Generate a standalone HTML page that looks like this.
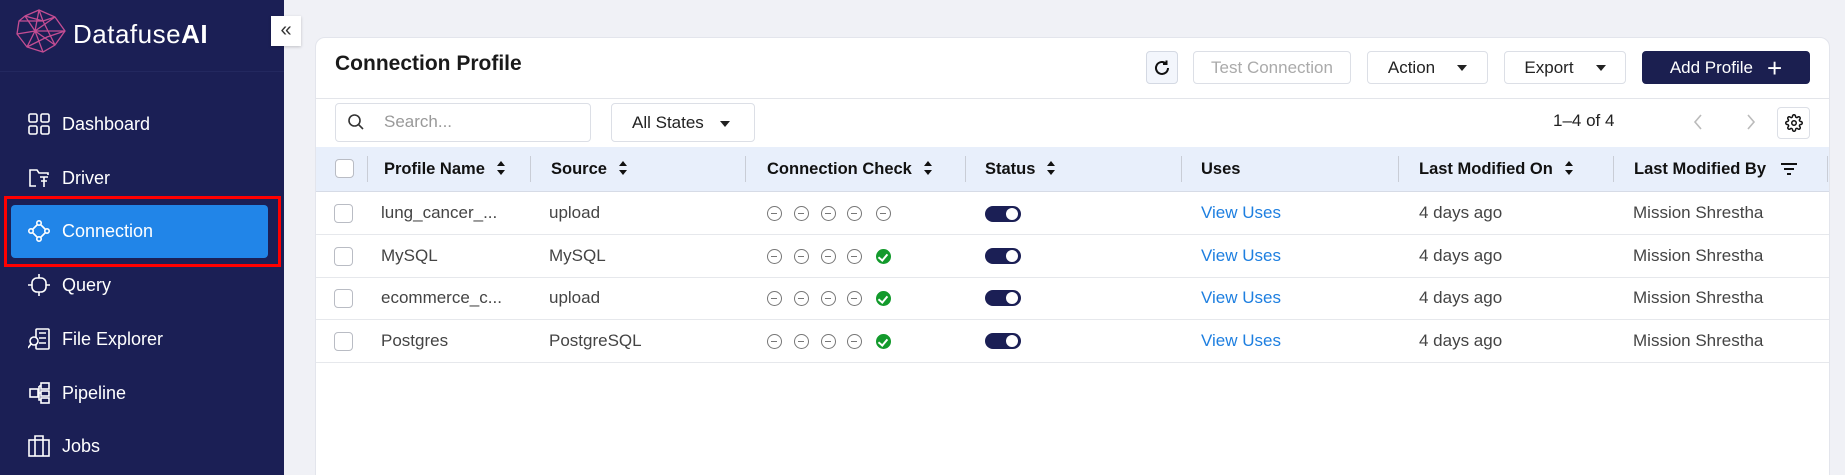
<!DOCTYPE html>
<html style="width:1845px;height:475px;overflow:hidden"><head><meta charset="utf-8">
<style>
*{box-sizing:border-box;margin:0;padding:0}
body{width:1845px;height:475px;overflow:hidden;background:#f0f1f6;font-family:"Liberation Sans",sans-serif;position:relative}
.side{position:absolute;left:0;top:0;width:284px;height:475px;background:#1b1f55}
.abs{position:absolute}
.logo-t{left:73px;top:19px;color:#fff;font-size:26px;letter-spacing:0.5px}
.hr{left:0;top:71px;width:284px;height:1px;background:#23285f}
.nav{left:28px;height:30px;color:#fff;font-size:18px;display:flex;align-items:center}
.nav svg{width:22px;height:22px;margin-right:12px;fill:none;stroke:#fff;stroke-width:1.6}
.act{left:11px;top:205px;width:257px;height:53px;background:#2185e8;border-radius:4px}
.red{left:4px;top:196px;width:277px;height:71px;border:3px solid #f00}
.coll{left:271px;top:16px;width:30px;height:30px;background:#fff;color:#333;font-size:20px;text-align:center;line-height:28px;box-shadow:0 1px 3px rgba(0,0,0,.2)}
.card{left:315px;top:37px;width:1515px;height:440px;background:#fff;border:1px solid #e3e5ec;border-radius:10px 10px 0 0}
.btn{position:absolute;top:51px;height:33px;border:1px solid #dcdfe6;border-radius:4px;background:#fff;font-size:17px;color:#222;display:flex;align-items:center;justify-content:center}
.car{display:inline-block;width:0;height:0;border-left:5px solid transparent;border-right:5px solid transparent;border-top:6px solid #222;margin-left:22px}
.th{position:absolute;top:160px;font-size:16.5px;font-weight:bold;color:#111}
.sep{position:absolute;top:156px;width:1px;height:26px;background:#c9cdd6}
.sort{display:inline-block;margin-left:12px;vertical-align:middle;position:relative;width:8px;height:14px;top:-2px}
.sort:before{content:"";position:absolute;top:0;left:0;border-left:4px solid transparent;border-right:4px solid transparent;border-bottom:5px solid #111}
.sort:after{content:"";position:absolute;bottom:0;left:0;border-left:4px solid transparent;border-right:4px solid transparent;border-top:5px solid #111}
.td{position:absolute;font-size:17px;color:#444}
.cb{position:absolute;width:19px;height:19px;border:1px solid #b9bcc4;border-radius:4px;background:#fff}
.rl{position:absolute;left:316px;width:1513px;height:1px;background:#e6e8ec}
.mc{position:absolute;width:15px;height:15px;border:1.4px solid #777;border-radius:50%}
.mc:after{content:"";position:absolute;left:3px;top:5.5px;width:6px;height:1.4px;background:#777}
.ok{position:absolute;width:15px;height:15px;border-radius:50%;background:#139a2c}
.ok:after{content:"";position:absolute;left:4px;top:3px;width:4px;height:7px;border:solid #fff;border-width:0 2px 2px 0;transform:rotate(40deg)}
.tg{position:absolute;left:985px;width:36px;height:16px;border-radius:8px;background:#1b1f55}
.tg:after{content:"";position:absolute;right:3px;top:2px;width:12px;height:12px;border-radius:50%;background:#fff}
.lk{color:#1e7fe0}
</style></head><body>
<div class="side">
<svg class="abs" style="left:15px;top:9px" width="52" height="44" viewBox="0 0 52 44" fill="none" stroke="#c44d93" stroke-width="1.3">
<path d="M10 7 L24 1 L40 8 L50 22 L40 36 L28 43 L12 38 L2 25 L4 12 Z"/>
<path d="M10 7 L20 22 L2 25 M24 1 L20 22 L28 43 M40 8 L20 22 L40 36 M50 22 L20 22 L12 38 M4 12 L28 12 L40 8 M28 12 L40 36 M12 38 L32 28 L50 22 M24 1 L28 12 M10 7 L28 12"/>
</svg>
<div class="abs logo-t">Datafuse<b>AI</b></div>
<div class="abs hr"></div>
<div class="abs act"></div>
<div class="abs red"></div>
<div class="abs nav" style="top:109px"><svg viewBox="0 0 22 22"><rect x="1" y="1" width="8" height="8" rx="1.5"/><rect x="13" y="1" width="8" height="8" rx="1.5"/><rect x="1" y="13" width="8" height="8" rx="1.5"/><rect x="13" y="13" width="8" height="8" rx="1.5"/></svg>Dashboard</div>
<div class="abs nav" style="top:163px"><svg viewBox="0 0 22 22"><path d="M8 19H2V3h7l2 3h9v2M12 10h8M16 10v10M13 14h6"/></svg>Driver</div>
<div class="abs nav" style="top:216px"><svg viewBox="0 0 22 22"><circle cx="11" cy="3" r="2.2"/><circle cx="3" cy="11" r="2.2"/><circle cx="19" cy="11" r="2.2"/><circle cx="11" cy="19" r="2.2"/><path d="M9.5 4.5 4.5 9.5M12.5 4.5l5 5M4.5 12.5l5 5M17.5 12.5l-5 5"/></svg>Connection</div>
<div class="abs nav" style="top:270px"><svg viewBox="0 0 22 22"><rect x="4" y="4" width="14" height="14" rx="5"/><path d="M11 0v4M11 18v4M0 11h4M18 11h4"/></svg>Query</div>
<div class="abs nav" style="top:324px"><svg viewBox="0 0 22 22"><rect x="8" y="1" width="13" height="20" rx="1"/><path d="M11 5h7M11 10h7M11 15h7"/><circle cx="6" cy="13" r="4" fill="#1b1f55"/><path d="M3 16l-3 4"/></svg>File Explorer</div>
<div class="abs nav" style="top:378px"><svg viewBox="0 0 22 22"><rect x="2" y="7" width="8" height="8"/><rect x="13" y="1" width="8" height="6"/><rect x="13" y="9" width="8" height="5"/><rect x="13" y="16" width="8" height="5"/><path d="M10 11h3M11 4v14h2M11 4h2"/></svg>Pipeline</div>
<div class="abs nav" style="top:431px"><svg viewBox="0 0 22 22"><rect x="1" y="5" width="20" height="16"/><path d="M7 5V1h8v4M7 5v16M15 5v16"/></svg>Jobs</div>
<div class="abs coll">«</div>
</div>

<div class="abs card"></div>
<div class="abs" style="left:335px;top:52px;font-size:21px;font-weight:bold;color:#1a1a1a">Connection Profile</div>
<div class="btn" style="left:1146px;width:32px;background:#f3f6fc;border-color:#d4d9e3"><svg width="18" height="18" viewBox="0 0 18 18" fill="none" stroke="#111" stroke-width="2"><path d="M15 9a6 6 0 1 1-2-4.5"/><path d="M13.5 1.5v3.5H10" /></svg></div>
<div class="btn" style="left:1193px;width:158px;color:#aaa">Test Connection</div>
<div class="btn" style="left:1367px;width:121px">Action<span class="car"></span></div>
<div class="btn" style="left:1504px;width:122px">Export<span class="car"></span></div>
<div class="btn" style="left:1642px;width:168px;background:#1b1f50;border-color:#1b1f50;color:#fff">Add Profile<span style="font-size:26px;margin-left:14px;font-weight:300;line-height:20px">+</span></div>
<div class="abs" style="left:316px;top:98px;width:1513px;height:1px;background:#e3e5ea"></div>

<div class="abs" style="left:335px;top:103px;width:256px;height:39px;border:1px solid #dcdfe6;border-radius:4px"></div>
<svg class="abs" style="left:347px;top:113px" width="18" height="18" viewBox="0 0 18 18" fill="none" stroke="#333" stroke-width="1.6"><circle cx="7.5" cy="7.5" r="5.5"/><path d="M11.5 11.5 16 16"/></svg>
<div class="abs" style="left:384px;top:112px;font-size:17px;color:#999">Search...</div>
<div class="abs" style="left:611px;top:103px;width:144px;height:39px;border:1px solid #dcdfe6;border-radius:4px;font-size:17px;color:#222;padding:9px 0 0 20px">All States<span class="car" style="margin-left:16px;vertical-align:middle"></span></div>
<div class="abs" style="left:1553px;top:111px;font-size:17px;color:#222">1–4 of 4</div>
<svg class="abs" style="left:1692px;top:113px" width="12" height="18" viewBox="0 0 12 18" fill="none" stroke="#bbb" stroke-width="1.6"><path d="M9 2 3 9l6 7"/></svg>
<svg class="abs" style="left:1745px;top:113px" width="12" height="18" viewBox="0 0 12 18" fill="none" stroke="#bbb" stroke-width="1.6"><path d="M3 2l6 7-6 7"/></svg>
<div class="abs" style="left:1777px;top:107px;width:33px;height:32px;border:1px solid #dcdfe6;border-radius:4px"></div>
<svg class="abs" style="left:1785px;top:114px" width="18" height="18" viewBox="0 0 24 24" fill="none" stroke="#111" stroke-width="2"><circle cx="12" cy="12" r="3"/><path d="M19.4 15a1.65 1.65 0 0 0 .33 1.82l.06.06a2 2 0 1 1-2.830 2.83l-.06-.06a1.65 1.65 0 0 0-1.820-.33 1.65 1.65 0 0 0-1 1.51V21a2 2 0 1 1-4 0v-.09A1.65 1.65 0 0 0 9 19.4a1.650 1.650 0 0 0-1.820.33l-.06.06a2 2 0 1 1-2.830-2.830l.06-.06A1.65 1.65 0 0 0 4.6 15a1.65 1.65 0 0 0-1.51-1H3a2 2 0 1 1 0-4h.09A1.65 1.65 0 0 0 4.6 9a1.65 1.65 0 0 0-.33-1.82l-.06-.06a2 2 0 1 1 2.830-2.830l.06.06A1.65 1.65 0 0 0 9 4.6a1.65 1.65 0 0 0 1-1.51V3a2 2 0 1 1 4 0v.09a1.65 1.65 0 0 0 1 1.51 1.65 1.65 0 0 0 1.820-.33l.06-.06a2 2 0 1 1 2.830 2.830l-.06.06A1.65 1.65 0 0 0 19.4 9a1.65 1.65 0 0 0 1.510 1H21a2 2 0 1 1 0 4h-.09a1.65 1.65 0 0 0-1.51 1z"/></svg>

<div class="abs" style="left:316px;top:147px;width:1513px;height:45px;background:#e8effb;border-bottom:1px solid #d6dbe6"></div>
<div class="cb" style="left:335px;top:159px"></div>
<div class="sep" style="left:367px"></div>
<div class="th" style="left:384px">Profile Name<span class="sort"></span></div>
<div class="sep" style="left:530px"></div>
<div class="th" style="left:551px">Source<span class="sort"></span></div>
<div class="sep" style="left:745px"></div>
<div class="th" style="left:767px">Connection Check<span class="sort"></span></div>
<div class="sep" style="left:965px"></div>
<div class="th" style="left:985px">Status<span class="sort"></span></div>
<div class="sep" style="left:1181px"></div>
<div class="th" style="left:1201px">Uses</div>
<div class="sep" style="left:1398px"></div>
<div class="th" style="left:1419px">Last Modified On<span class="sort"></span></div>
<div class="sep" style="left:1613px"></div>
<div class="th" style="left:1634px">Last Modified By</div>
<svg class="abs" style="left:1780px;top:162px" width="18" height="14" viewBox="0 0 18 14" stroke="#111" stroke-width="2"><path d="M1 2h16M4 7h10M7 12h4"/></svg>
<div class="sep" style="left:1827px"></div>

<div class="cb" style="left:334px;top:204px"></div>
<div class="td" style="left:381px;top:203px">lung_cancer_...</div>
<div class="td" style="left:549px;top:203px">upload</div>
<div class="mc" style="left:767px;top:206px"></div><div class="mc" style="left:794px;top:206px"></div><div class="mc" style="left:821px;top:206px"></div><div class="mc" style="left:847px;top:206px"></div><div class="mc" style="left:876px;top:206px"></div>
<div class="tg" style="top:206px"></div>
<div class="td lk" style="left:1201px;top:203px">View Uses</div>
<div class="td" style="left:1419px;top:203px">4 days ago</div>
<div class="td" style="left:1633px;top:203px">Mission Shrestha</div>
<div class="rl" style="top:234px"></div>

<div class="cb" style="left:334px;top:247px"></div>
<div class="td" style="left:381px;top:246px">MySQL</div>
<div class="td" style="left:549px;top:246px">MySQL</div>
<div class="mc" style="left:767px;top:249px"></div><div class="mc" style="left:794px;top:249px"></div><div class="mc" style="left:821px;top:249px"></div><div class="mc" style="left:847px;top:249px"></div><div class="ok" style="left:876px;top:249px"></div>
<div class="tg" style="top:248px"></div>
<div class="td lk" style="left:1201px;top:246px">View Uses</div>
<div class="td" style="left:1419px;top:246px">4 days ago</div>
<div class="td" style="left:1633px;top:246px">Mission Shrestha</div>
<div class="rl" style="top:277px"></div>

<div class="cb" style="left:334px;top:289px"></div>
<div class="td" style="left:381px;top:288px">ecommerce_c...</div>
<div class="td" style="left:549px;top:288px">upload</div>
<div class="mc" style="left:767px;top:291px"></div><div class="mc" style="left:794px;top:291px"></div><div class="mc" style="left:821px;top:291px"></div><div class="mc" style="left:847px;top:291px"></div><div class="ok" style="left:876px;top:291px"></div>
<div class="tg" style="top:290px"></div>
<div class="td lk" style="left:1201px;top:288px">View Uses</div>
<div class="td" style="left:1419px;top:288px">4 days ago</div>
<div class="td" style="left:1633px;top:288px">Mission Shrestha</div>
<div class="rl" style="top:319px"></div>

<div class="cb" style="left:334px;top:332px"></div>
<div class="td" style="left:381px;top:331px">Postgres</div>
<div class="td" style="left:549px;top:331px">PostgreSQL</div>
<div class="mc" style="left:767px;top:334px"></div><div class="mc" style="left:794px;top:334px"></div><div class="mc" style="left:821px;top:334px"></div><div class="mc" style="left:847px;top:334px"></div><div class="ok" style="left:876px;top:334px"></div>
<div class="tg" style="top:333px"></div>
<div class="td lk" style="left:1201px;top:331px">View Uses</div>
<div class="td" style="left:1419px;top:331px">4 days ago</div>
<div class="td" style="left:1633px;top:331px">Mission Shrestha</div>
<div class="rl" style="top:362px"></div>
</body></html>
